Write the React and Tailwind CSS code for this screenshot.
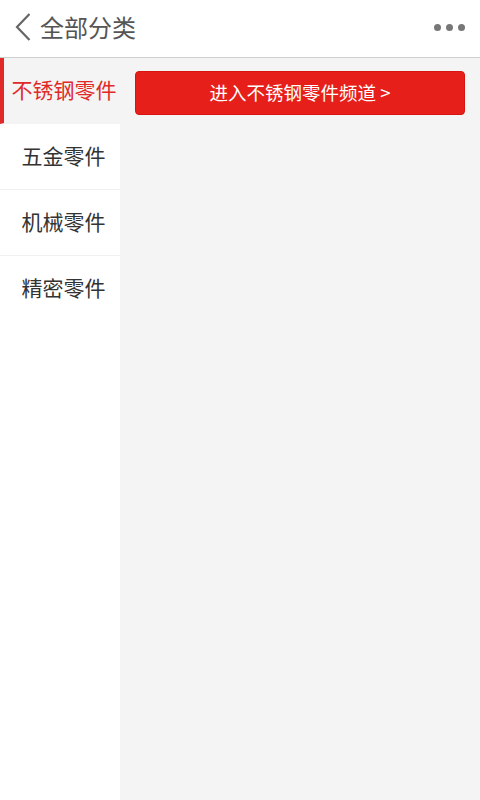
import { useState } from 'react';

const categories = ['不锈钢零件', '五金零件', '机械零件', '精密零件'];

const font = { fontFamily: '"Noto Sans CJK SC", "Noto Sans", sans-serif' };

export default function App() {
  const [active, setActive] = useState(0);

  return (
    <div className="w-[480px] h-[800px] flex flex-col bg-[#f4f4f4] overflow-hidden" style={font}>
      {/* header */}
      <div className="h-[58px] shrink-0 bg-white border-b border-[#cfcfcf] flex items-center pb-[3px]">
        <svg width="16" height="28" viewBox="0 0 16 28" className="ml-[15px]">
          <path d="M14.5 1 L2 14 L14.5 27" fill="none" stroke="#666" strokeWidth="2.2" />
        </svg>
        <h1 className="ml-[9px] text-[24px] leading-none text-[#555]">全部分类</h1>
        <div className="ml-auto mr-[15px] flex gap-[5px]">
          <span className="w-[7px] h-[7px] rounded-full bg-[#777]" />
          <span className="w-[7px] h-[7px] rounded-full bg-[#777]" />
          <span className="w-[7px] h-[7px] rounded-full bg-[#777]" />
        </div>
      </div>

      <div className="flex flex-1 min-h-0">
        {/* sidebar */}
        <div className="w-[120px] shrink-0 bg-white flex flex-col">
          {categories.map((c, i) => (
            <button
              key={c}
              onClick={() => setActive(i)}
              className={`h-[66px] flex items-center justify-center text-[21px] border-b pb-[2px] ${
                i === active
                  ? 'bg-[#f4f4f4] text-[#e02a2a] border-l-4 border-l-[#e02a2a] border-b-transparent pl-[4px]'
                  : i === categories.length - 1
                  ? 'text-[#333] border-b-transparent pl-[7px]'
                  : 'text-[#333] border-b-[#f0f0f0] pl-[7px]'
              }`}
            >
              {c}
            </button>
          ))}
        </div>

        {/* content */}
        <div className="flex-1 pt-[13px] pl-[15px] pr-[15px]">
          <button className="w-full h-[44px] rounded-[4px] bg-[#e61f1a] border border-[#d81410] text-white text-[18.5px] flex items-center justify-center">
            进入{categories[active]}频道 &gt;
          </button>
        </div>
      </div>
    </div>
  );
}
